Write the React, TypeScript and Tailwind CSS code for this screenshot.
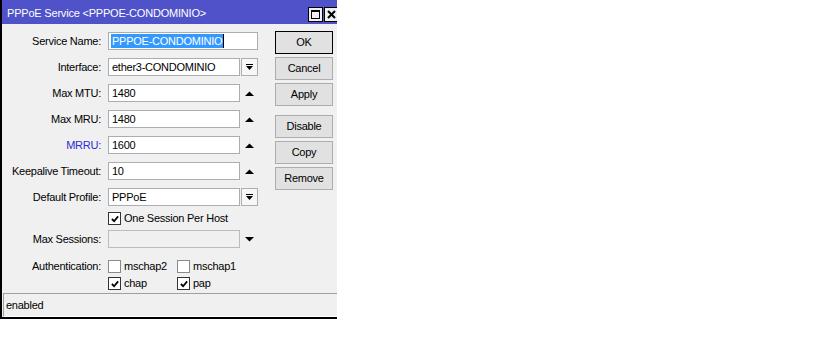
import React from "react";

const font = { fontFamily: '"Liberation Sans", Arial, sans-serif' };

function DropBtn() {
  return (
    <div className="ml-px w-[17px] h-[18px] border border-[#abadb3] bg-[#f7f7f7] flex items-center justify-center">
      <svg width="7" height="7" viewBox="0 0 7 7">
        <rect x="0" y="0" width="7" height="1" fill="#000" />
        <polygon points="0,2 7,2 3.5,6" fill="#000" />
      </svg>
    </div>
  );
}

function UpArrow() {
  return (
    <div className="ml-px w-[17px] h-[18px] flex items-center justify-center">
      <svg width="9" height="5" viewBox="0 0 9 5">
        <polygon points="0,5 9,5 4.5,0.5" fill="#000" />
      </svg>
    </div>
  );
}

function DownArrow() {
  return (
    <div className="ml-px w-[17px] h-[18px] flex items-center justify-center">
      <svg width="9" height="5" viewBox="0 0 9 5">
        <polygon points="0,0 9,0 4.5,4.5" fill="#000" />
      </svg>
    </div>
  );
}

function Check({ checked }: { checked: boolean }) {
  return (
    <div
      className={
        "w-[13px] h-[13px] bg-white border flex items-center justify-center " +
        (checked ? "border-[#333333]" : "border-[#8a8a8a]")
      }
    >
      {checked && (
        <svg width="8" height="8" viewBox="0 0 9 9">
          <polyline points="1,4.5 3.5,7 8,1.5" fill="none" stroke="#000" strokeWidth="2" />
        </svg>
      )}
    </div>
  );
}

function Row({
  label,
  blue,
  children,
  className,
}: {
  label: string;
  blue?: boolean;
  children: React.ReactNode;
  className?: string;
}) {
  return (
    <div className={"flex items-center h-[18px] " + (className || "")}>
      <span
        className={
          "w-[100px] text-right pr-px text-[11px] tracking-[-0.25px] " +
          (blue ? "text-[#2b2bd6]" : "text-black")
        }
      >
        {label}
      </span>
      <div className="ml-[6px] flex items-center">{children}</div>
    </div>
  );
}

function Input({ value, w = 132, disabled }: { value?: string; w?: number; disabled?: boolean }) {
  return (
    <div
      className={
        "h-[18px] border flex items-center pl-[3px] text-[11px] tracking-[-0.25px] text-black " +
        (disabled ? "bg-[#f0f0f0] border-[#bcbcbc]" : "bg-white border-[#abadb3]")
      }
      style={{ width: w }}
    >
      {value}
    </div>
  );
}

function Btn({ label, primary, className }: { label: string; primary?: boolean; className?: string }) {
  return (
    <div
      className={
        "w-[58px] h-[23px] flex items-center justify-center text-[11px] tracking-[-0.25px] bg-[#e1e1e1] border " +
        (primary ? "border-black" : "border-[#adadad]") +
        " " +
        (className || "")
      }
    >
      {label}
    </div>
  );
}

export default function App() {
  return (
    <div className="w-[819px] h-[343px] bg-white" style={font}>
      <div className="w-[337px] h-[319px] flex flex-col border-l-2 border-b-2 border-black bg-[#f0f0f0] overflow-hidden">
        {/* Title bar */}
        <div className="h-[24px] bg-[#4f52c9] flex items-center justify-between">
          <span className="pl-[5px] pt-[2px] text-white text-[11px] tracking-[-0.2px] leading-none">
            PPPoE Service &lt;PPPOE-CONDOMINIO&gt;
          </span>
          <div className="flex items-center gap-px mt-[5px] -mr-[2px]">
            <div className="w-[15px] h-[15px] border border-black bg-[#f0f0f0] flex items-center justify-center">
              <div className="w-[9px] h-[9px] border border-black border-t-2" />
            </div>
            <div className="w-[15px] h-[15px] border border-black bg-[#f0f0f0] flex items-center justify-center">
              <svg width="9" height="9" viewBox="0 0 9 9">
                <path d="M1 1 L8 8 M8 1 L1 8" stroke="#000" strokeWidth="2" />
              </svg>
            </div>
          </div>
        </div>

        {/* Body */}
        <div className="h-[269px] flex">
          <div className="w-[273px] pt-[8px] flex flex-col">
            <Row label="Service Name:">
              <div className="w-[150px] h-[18px] border border-[#abadb3] bg-white flex items-center pl-[2px] text-[11px] tracking-[-0.25px]">
                <span className="bg-[#3399ff] text-white leading-[14px] px-px">PPPOE-CONDOMINIO</span>
                <span className="w-px h-[14px] bg-black" />
              </div>
            </Row>
            <Row label="Interface:" className="mt-[8px]">
              <Input value="ether3-CONDOMINIO" />
              <DropBtn />
            </Row>
            <Row label="Max MTU:" className="mt-[8px]">
              <Input value="1480" />
              <UpArrow />
            </Row>
            <Row label="Max MRU:" className="mt-[8px]">
              <Input value="1480" />
              <UpArrow />
            </Row>
            <Row label="MRRU:" blue className="mt-[8px]">
              <Input value="1600" />
              <UpArrow />
            </Row>
            <Row label="Keepalive Timeout:" className="mt-[8px]">
              <Input value="10" />
              <UpArrow />
            </Row>
            <Row label="Default Profile:" className="mt-[8px]">
              <Input value="PPPoE" />
              <DropBtn />
            </Row>
            <div className="flex items-center h-[13px] mt-[6px] pl-[106px]">
              <Check checked />
              <span className="ml-[3px] text-[11px] tracking-[-0.25px]">One Session Per Host</span>
            </div>
            <Row label="Max Sessions:" className="mt-[5px]">
              <Input disabled />
              <DownArrow />
            </Row>
            <div className="flex mt-[12px]">
              <span className="w-[100px] text-right pr-px text-[11px] tracking-[-0.25px] leading-[13px]">
                Authentication:
              </span>
              <div className="ml-[6px] grid grid-cols-[69px_80px] gap-y-[4px]">
                <div className="flex items-center h-[13px]">
                  <Check checked={false} />
                  <span className="ml-[3px] text-[11px] tracking-[-0.25px]">mschap2</span>
                </div>
                <div className="flex items-center h-[13px]">
                  <Check checked={false} />
                  <span className="ml-[3px] text-[11px] tracking-[-0.25px]">mschap1</span>
                </div>
                <div className="flex items-center h-[13px]">
                  <Check checked />
                  <span className="ml-[3px] text-[11px] tracking-[-0.25px]">chap</span>
                </div>
                <div className="flex items-center h-[13px]">
                  <Check checked />
                  <span className="ml-[3px] text-[11px] tracking-[-0.25px]">pap</span>
                </div>
              </div>
            </div>
          </div>
          <div className="pt-[7px] flex flex-col">
            <Btn label="OK" primary />
            <Btn label="Cancel" className="mt-[3px]" />
            <Btn label="Apply" className="mt-[3px]" />
            <Btn label="Disable" className="mt-[9px]" />
            <Btn label="Copy" className="mt-[3px]" />
            <Btn label="Remove" className="mt-[3px]" />
          </div>
        </div>

        {/* Status bar */}
        <div className="h-[24px] ml-px border-t border-l border-[#a0a0a0] border-b border-b-white flex items-center pl-[2px] text-[11px] tracking-[-0.25px]">
          enabled
        </div>
      </div>
    </div>
  );
}
